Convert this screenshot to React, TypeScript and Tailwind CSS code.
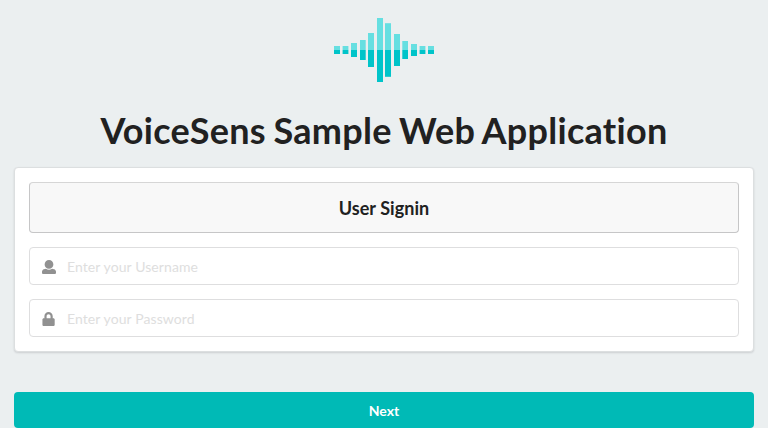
import React from "react";

const bars: [number, number, number][] = [
  [334, 6, 4],
  [342.6, 5.8, 4],
  [351, 6, 7],
  [360, 5.7, 10],
  [368, 6, 17],
  [377, 6, 32],
  [385, 6, 26.8],
  [394, 6, 16],
  [402.3, 5.7, 9],
  [411, 6, 6],
  [419.6, 5.8, 4],
  [428, 6, 4],
];

function Logo() {
  return (
    <svg width="100" height="64" viewBox="334 18 100 64" className="block">
      {bars.map(([x, w, h]) => (
        <g key={x}>
          <rect x={x} y={50 - h} width={w} height={h} fill="#66dfe1" />
          <rect x={x} y={50} width={w} height={h} fill="#00c4c9" />
        </g>
      ))}
    </svg>
  );
}

function UserIcon() {
  return (
    <svg width="14" height="14" viewBox="0 0 512 512" fill="#919191" className="mt-px">
      <path d="M256 0c88.366 0 160 71.634 160 160s-71.634 160-160 160S96 248.366 96 160 167.634 0 256 0zm183.283 333.821l-71.313-17.828c-74.923 53.89-165.738 41.864-223.94 0l-71.313 17.828C29.981 344.505 0 382.903 0 426.955V464c0 26.51 21.49 48 48 48h416c26.51 0 48-21.49 48-48v-37.045c0-44.052-29.981-82.45-72.717-93.134z" />
    </svg>
  );
}

function LockIcon() {
  return (
    <svg width="14" height="14" viewBox="-16 0 512 512" fill="#919191" className="mt-px">
      <path d="M400 224h-24v-72C376 68.2 307.8 0 224 0S72 68.2 72 152v72H48c-26.5 0-48 21.5-48 48v192c0 26.5 21.5 48 48 48h352c26.5 0 48-21.5 48-48V272c0-26.5-21.5-48-48-48zm-104 0H152v-72c0-39.7 32.3-72 72-72s72 32.3 72 72v72z" />
    </svg>
  );
}

function Field({ icon, type, placeholder }: { icon: React.ReactNode; type: string; placeholder: string }) {
  return (
    <label className="flex h-[38px] items-center rounded border border-[#dededf] bg-white pl-3">
      {icon}
      <input
        type={type}
        placeholder={placeholder}
        className="ml-[11px] h-full flex-1 bg-transparent text-sm tracking-[0.09px] outline-none placeholder:text-[#dedede]"
      />
    </label>
  );
}

export default function App() {
  return (
    <div className="flex h-[428px] flex-col overflow-hidden bg-[#ebeff0] px-3.5 pt-[18px] font-['Lato',sans-serif] text-[#212121] [font-variant-ligatures:none]">
      <div className="flex justify-center">
        <Logo />
      </div>
      <h1 className="mt-[26px] h-[46px] text-center text-[36px] leading-[45px] font-bold tracking-[0.3px] [word-spacing:-1.6px] whitespace-nowrap">
        VoiceSens Sample Web Application
      </h1>
      <form className="mt-[13px] flex h-[185px] flex-col gap-3.5 rounded border border-[#dcdfe0] bg-white p-3.5 shadow-[0_1px_2px_0_rgba(34,36,38,0.15)]">
        <div className="flex h-[51px] items-center justify-center rounded border border-t-[#d6d6d6] border-r-[#c6c6c7] border-b-[#c6c6c7] border-l-[#c6c6c7] bg-[#f8f8f8] text-lg font-bold tracking-[0.06px]">
          User Signin
        </div>
        <Field icon={<UserIcon />} type="text" placeholder="Enter your Username" />
        <Field icon={<LockIcon />} type="password" placeholder="Enter your Password" />
      </form>
      <button className="mt-10 h-9 rounded bg-[#00bab6] pt-0.5 text-sm font-bold text-white">Next</button>
    </div>
  );
}
